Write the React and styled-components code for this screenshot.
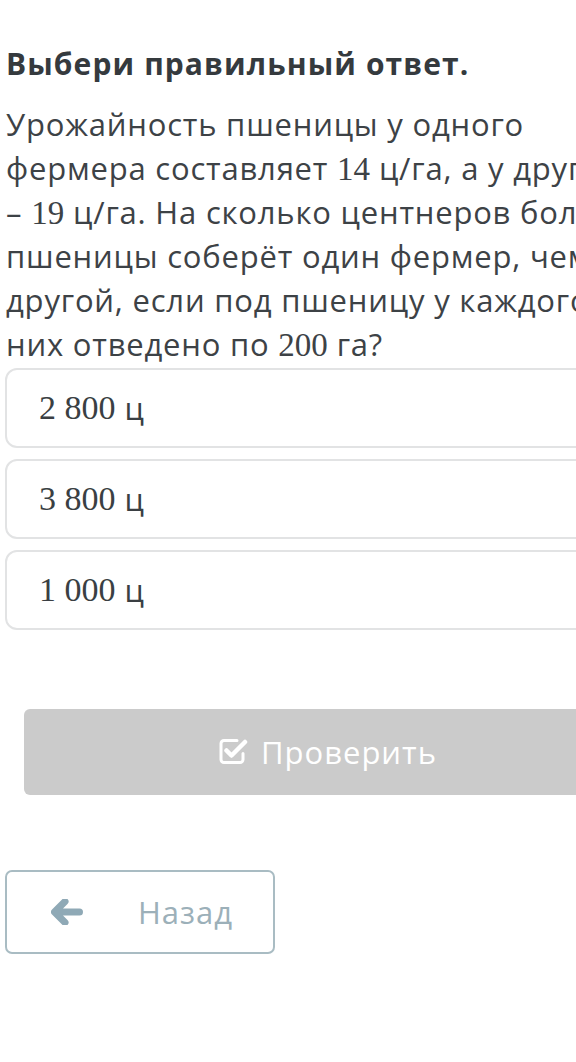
import React from "react";
import styled, { createGlobalStyle } from "styled-components";

const Global = createGlobalStyle`
  html, body {
    margin: 0;
    padding: 0;
    background: #fff;
    overflow-x: hidden;
  }
`;

const Page = styled.div`
  width: 640px;
  padding: 42px 0 0 5px;
  font-family: "Open Sans", sans-serif;
  color: #3d4246;
`;

const Title = styled.h1`
  margin: 0 0 0 1px;
  font-size: 30px;
  font-weight: 700;
  line-height: 44px;
  letter-spacing: 1.1px;
  color: #353a3e;
`;

const Question = styled.p`
  margin: 16px 0 0 1px;
  font-size: 31px;
  line-height: 44px;
  letter-spacing: 0.8px;
  white-space: nowrap;
  color: #3d4246;
`;

const Num = styled.span`
  font-family: "Liberation Serif", serif;
  font-size: ${(p) => p.size || 34}px;
  line-height: 0;
  letter-spacing: 0;
`;

const Options = styled.div`
  display: flex;
  flex-direction: column;
  gap: 11px;
  margin-top: 2px;
`;

const Option = styled.div`
  height: 76px;
  border: 2px solid #e2e3e4;
  border-radius: 12px;
  display: flex;
  align-items: center;
  padding-left: 32px;
  font-size: 34px;
  color: #3a3f43;
`;

const Unit = styled.span`
  font-family: "Open Sans", sans-serif;
  font-size: 31px;
  margin-left: 9px;
`;

const CheckButton = styled.div`
  margin: 79px 14px 0 19px;
  height: 86px;
  background: #cbcbcb;
  border-radius: 6px;
  display: flex;
  align-items: center;
  justify-content: center;
  gap: 13px;
  color: #fff;
  font-size: 31px;
  letter-spacing: 1px;
`;

const BackButton = styled.div`
  margin-top: 75px;
  width: 266px;
  height: 80px;
  border: 2px solid #a9bcc3;
  border-radius: 7px;
  display: flex;
  align-items: center;
  color: #9cb0b9;
  font-size: 31px;
  letter-spacing: 1px;
`;

const Icon = styled.svg`
  flex: none;
  margin: ${(p) => p.m || "0"};
`;

const CheckIcon = () => (
  <Icon width="30" height="28" viewBox="0 0 30 28" m="0 0 2px 0">
    <path
      d="M19 3.5H6a3 3 0 0 0-3 3v16a3 3 0 0 0 3 3h16a3 3 0 0 0 3-3v-6"
      fill="none"
      stroke="#fff"
      strokeWidth="3"
      strokeLinecap="round"
    />
    <path
      d="M8.5 13.5l5 5L27 5"
      fill="none"
      stroke="#fff"
      strokeWidth="4.5"
      strokeLinecap="round"
      strokeLinejoin="round"
    />
  </Icon>
);

const ArrowIcon = () => (
  <Icon width="32" height="26" viewBox="0 0 32 26" m="0 55px 0 44px">
    <path
      d="M14 2.5L3.5 13L14 23.5M4.5 13H28.5"
      fill="none"
      stroke="#8fa9b6"
      strokeWidth="7"
      strokeLinecap="round"
      strokeLinejoin="round"
    />
  </Icon>
);

export default function App() {
  return (
    <Page>
      <Global />
      <Title>Выбери правильный ответ.</Title>
      <Question>
        Урожайность пшеницы у одного
        <br />
        фермера составляет <Num size={33}>14</Num> ц/га, а у другого
        <br />– <Num size={33}>19</Num> ц/га. На сколько центнеров больше
        <br />
        пшеницы соберёт один фермер, чем
        <br />
        другой, если под пшеницу у каждого из
        <br />
        них отведено по <Num size={33}>200</Num> га?
      </Question>
      <Options>
        {["2 800", "3 800", "1 000"].map((v) => (
          <Option key={v}>
            <Num>{v}</Num>
            <Unit>ц</Unit>
          </Option>
        ))}
      </Options>
      <CheckButton>
        <CheckIcon />
        Проверить
      </CheckButton>
      <BackButton>
        <ArrowIcon />
        Назад
      </BackButton>
    </Page>
  );
}
